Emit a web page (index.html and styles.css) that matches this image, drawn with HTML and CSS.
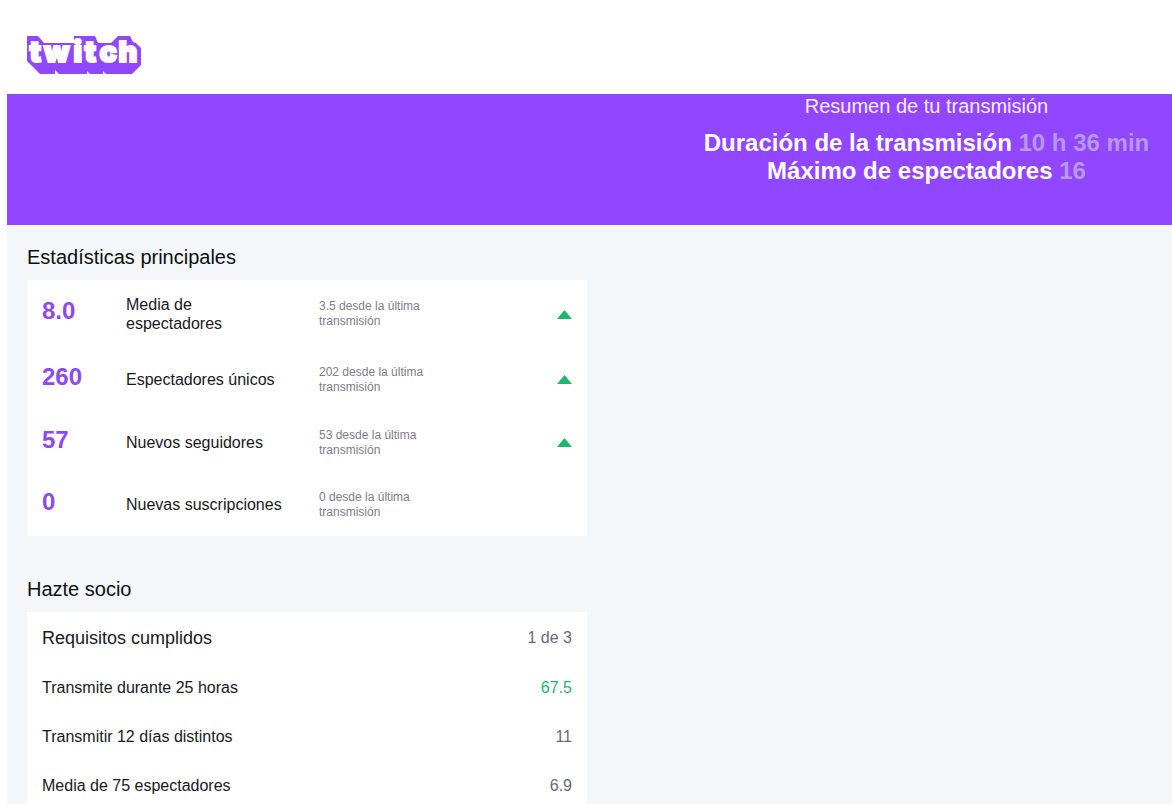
FILE: index.html
```html
<!DOCTYPE html>
<html lang="es">

<head>
    <meta charset="UTF-8">
    <meta name="viewport" content="width=device-width, initial-scale=1.0">
    <title>Resumen de tu transmisión</title>
    <link rel="stylesheet" href="styles.css">
</head>

<body>
    <header>
        <svg class="logo" width="116" height="54" viewBox="0 -14 116 54">
            <path class="logo-block" d="M1 1H12L18 8H48V1H69L72 8H85L92 1H104L107 7L110 8L115 13V30L106 39H80L77 36V39H64L61 36V39H33L29 35V39H14L1 26Z" />
            <text class="logo-text" x="3.5 18 47.5 58.5 73.5 92.5" y="26.5">twitch</text>
        </svg>
    </header>
    <section class="banner">
        <div class="summary">
            <p class="summary-title">Resumen de tu transmisión</p>
            <h1>Duración de la transmisión <span>10 h 36 min</span></h1>
            <h1>Máximo de espectadores <span>16</span></h1>
        </div>
    </section>
    <main>
        <h2>Estadísticas principales</h2>
        <div class="card stats">
            <div class="stat first">
                <strong>8.0</strong>
                <p class="label">Media de<br>espectadores</p>
                <p class="change">3.5 desde la última<br>transmisión</p>
                <i class="arrow-up"></i>
            </div>
            <div class="stat">
                <strong>260</strong>
                <p class="label">Espectadores únicos</p>
                <p class="change">202 desde la última<br>transmisión</p>
                <i class="arrow-up"></i>
            </div>
            <div class="stat">
                <strong>57</strong>
                <p class="label">Nuevos seguidores</p>
                <p class="change">53 desde la última<br>transmisión</p>
                <i class="arrow-up"></i>
            </div>
            <div class="stat">
                <strong>0</strong>
                <p class="label">Nuevas suscripciones</p>
                <p class="change">0 desde la última<br>transmisión</p>
            </div>
        </div>
        <h2>Hazte socio</h2>
        <div class="card partner">
            <div class="goal goal-title"><p>Requisitos cumplidos</p><span>1 de 3</span></div>
            <div class="goal"><p>Transmite durante 25 horas</p><span class="done">67.5</span></div>
            <div class="goal"><p>Transmitir 12 días distintos</p><span>11</span></div>
            <div class="goal"><p>Media de 75 espectadores</p><span>6.9</span></div>
        </div>
    </main>
</body>

</html>
```

FILE: styles.css
```css
* {
    box-sizing: border-box;
}

body {
    font-family: "Liberation Sans", Arial, sans-serif;
    margin: 0;
    padding-left: 7px;
    height: 804px;
    overflow: hidden;
    background-color: white;
    color: #18181b;
}

p,
h1,
h2 {
    margin: 0;
}

header {
    height: 94px;
    padding: 21px 0 0 19px;
}

.logo {
    display: block;
    overflow: visible;
}

.logo-block {
    fill: #9146ff;
}

.logo-text {
    font-family: Inter, sans-serif;
    font-size: 29px;
    font-weight: 900;
    fill: white;
    stroke: white;
    stroke-width: 2px;
    stroke-linejoin: miter;
}

.banner {
    display: flex;
    justify-content: flex-end;
    height: 131px;
    background-color: #9146ff;
    color: white;
}

.summary {
    width: 491px;
    text-align: center;
}

.summary-title {
    font-size: 20px;
    line-height: 24px;
    margin-bottom: 11px;
    color: #f5edff;
}

h1 {
    font-size: 24px;
    line-height: 28px;
}

h1 span {
    color: #b898ec;
}

main {
    padding: 20px;
    background-color: #f3f7fa;
}

h2 {
    font-size: 20px;
    font-weight: normal;
    line-height: 24px;
    margin-bottom: 11px;
    color: #0e0e10;
}

.card {
    width: 560px;
    background-color: white;
}

.stats {
    height: 256px;
    margin-bottom: 41px;
}

.stat {
    display: grid;
    grid-template-columns: 84px 193px 1fr 15px;
    align-items: start;
    height: 62px;
    padding: 0 15px;
}

.stat.first {
    height: 66px;
}

.stat:nth-child(2) {
    height: 63px;
}

.stat strong {
    font-size: 24px;
    line-height: 28px;
    margin-top: 17px;
    color: #8d49f2;
}

.label {
    font-size: 16px;
    line-height: 19px;
    margin-top: 24px;
}

.first .label {
    margin-top: 15px;
}

.change {
    font-size: 12px;
    line-height: 15px;
    margin-top: 19px;
    color: #7f7a8b;
}

.arrow-up {
    height: 9px;
    margin-top: 29px;
    background-color: #1db76b;
    clip-path: polygon(50% 0, 100% 100%, 0 100%);
}

.first .arrow-up {
    margin-top: 30px;
}

.goal {
    display: flex;
    justify-content: space-between;
    align-items: center;
    height: 49px;
    padding: 0 15px;
    font-size: 16px;
}

.goal-title {
    height: 51px;
}

.goal-title p {
    font-size: 18px;
    padding-top: 1px;
}

.goal span {
    color: #6b6875;
}

.goal .done {
    color: #1db76b;
}
```
